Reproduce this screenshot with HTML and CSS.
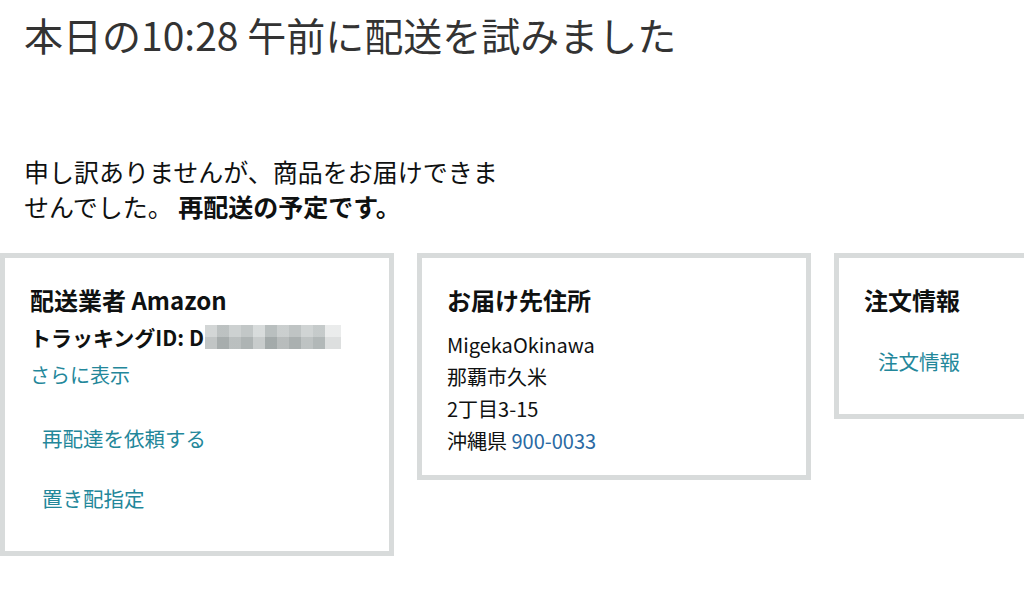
FILE: index.html
```html
<!DOCTYPE html>
<html lang="ja">
<head>
<meta charset="utf-8">
<title>配送状況</title>
<link rel="stylesheet" href="styles.css">
</head>
<body>
<h1 class="title">本日の10:28 午前に配送を試みました</h1>
<p class="notice">申し訳ありませんが、商品をお届けできませんでした。 <strong>再配送の予定です。</strong></p>
<div class="cards">
  <section class="card">
    <h2 class="card-title">配送業者 Amazon</h2>
    <div class="tracking">トラッキングID: D<span class="mosaic"></span></div>
    <a class="more">さらに表示</a>
    <ul class="actions">
      <li><a class="action">再配達を依頼する</a></li>
      <li><a class="action">置き配指定</a></li>
    </ul>
  </section>
  <section class="card card-address">
    <h2 class="card-title">お届け先住所</h2>
    <div class="address">
      <div>MigekaOkinawa</div>
      <div>那覇市久米</div>
      <div>2丁目3-15</div>
      <div>沖縄県 <span class="zip">900-0033</span></div>
    </div>
  </section>
  <section class="card card-order">
    <h2 class="card-title">注文情報</h2>
    <ul class="actions actions-order">
      <li><a class="action">注文情報</a></li>
    </ul>
  </section>
</div>
</body>
</html>
```
FILE: styles.css
```css
html, body {
  margin: 0;
  padding: 0;
  background: #ffffff;
}
body {
  font-family: "Noto Sans CJK JP", "Noto Sans", sans-serif;
  color: #0f1111;
  width: 1024px;
  height: 596px;
  overflow: hidden;
}
.title {
  margin: 0;
  padding: 10px 0 0 24px;
  font-size: 39px;
  line-height: 48px;
  font-weight: 400;
  color: #333333;
}
.notice {
  margin: 96px 0 0 24px;
  width: 482px;
  font-size: 25px;
  line-height: 35px;
  color: #0f1111;
}
.notice strong {
  font-weight: 700;
}
.cards {
  display: flex;
  gap: 23px;
  align-items: flex-start;
  margin-top: 29px;
}
.card {
  flex: 0 0 394px;
  box-sizing: border-box;
  border: 5px solid #d8dbdb;
  padding: 24px 25px 23px;
}
.card-address {
  padding-bottom: 18px;
}
.card-title {
  margin: 0;
  font-size: 24px;
  line-height: 36px;
  font-weight: 700;
  color: #0f1111;
}
.tracking {
  font-size: 21px;
  line-height: 38px;
  font-weight: 700;
  display: flex;
  align-items: center;
}
.mosaic {
  display: inline-block;
  width: 136px;
  height: 24px;
  margin-left: 1px;
  background:
    linear-gradient(180deg, rgba(255,255,255,0.18) 0 50%, rgba(0,0,0,0.04) 50% 100%),
    linear-gradient(90deg,
      #c9cdcd 0 12px, #aeb4b4 12px 24px, #c2c7c7 24px 36px, #b5bbbb 36px 48px,
      #d0d4d4 48px 60px, #aab1b1 60px 72px, #bfc4c4 72px 84px, #b1b7b7 84px 96px,
      #c6cbcb 96px 108px, #b9bfbf 108px 120px, #e6e8e8 120px 136px);
}
.more {
  display: block;
  font-size: 20px;
  line-height: 38px;
  color: #23879a;
}
.actions {
  list-style: none;
  margin: 14px 0 0;
  padding: 0;
}
.actions-order {
  margin-top: 13px;
}
.action {
  display: block;
  padding-left: 12px;
  font-size: 20.5px;
  line-height: 60px;
  color: #23879a;
}
.actions-order .action {
  padding-left: 14px;
}
.address {
  margin-top: 11px;
  font-size: 20px;
  line-height: 32px;
  color: #0f1111;
}
.zip {
  color: #2a6aa3;
}
```
